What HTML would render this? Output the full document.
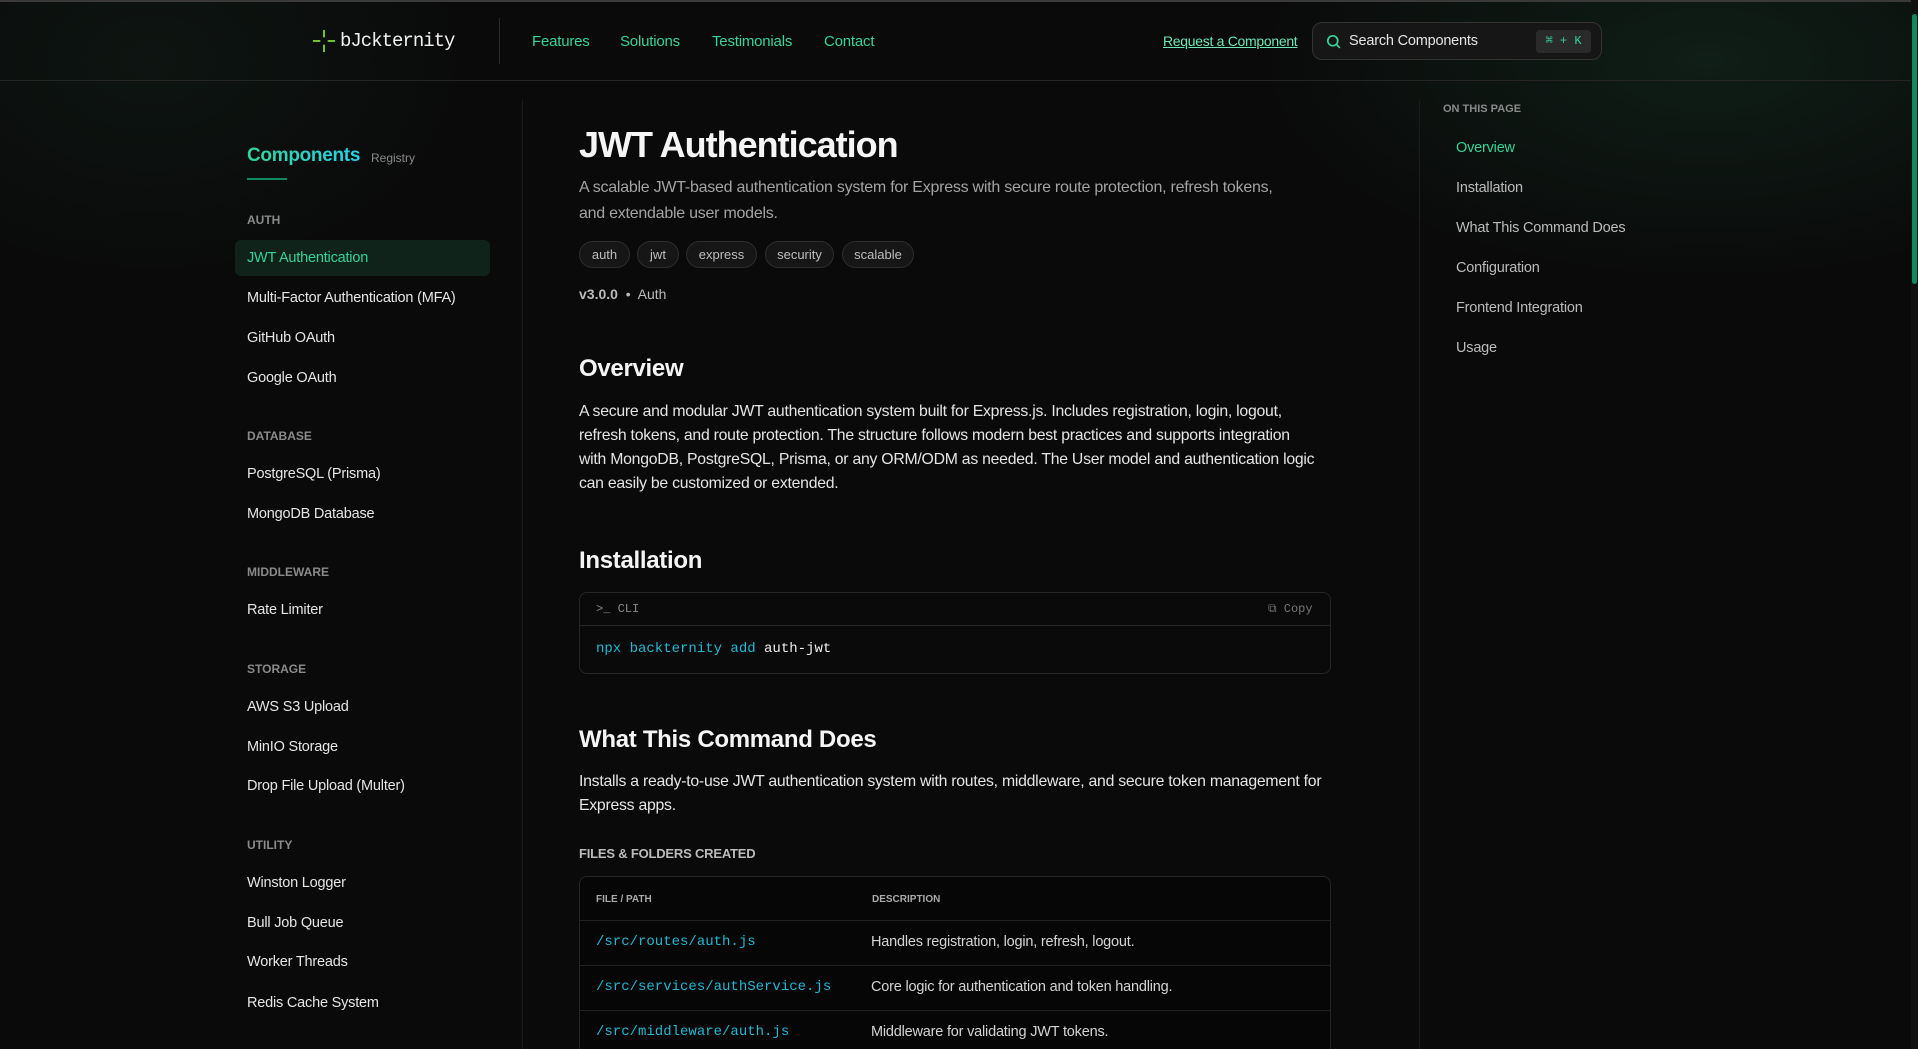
<!DOCTYPE html>
<html style="width:1918px;height:1049px;overflow:hidden"><head><meta charset="utf-8"><style>
*{box-sizing:border-box;margin:0;padding:0}
body{width:1918px;height:1049px;overflow:hidden;background:#0a0a0a;font-family:"Liberation Sans",sans-serif;color:#e5e5e5;position:relative}
.glow{position:absolute;right:0;top:0;width:700px;height:300px;background:radial-gradient(ellipse at 70% 20%,rgba(30,90,60,.25),transparent 65%)}
.glowl{position:absolute;left:0;top:0;width:500px;height:300px;background:radial-gradient(ellipse at 30% 20%,rgba(30,70,50,.18),transparent 65%)}
.top{position:absolute;left:0;top:0;width:1918px;height:2px;background:#3a3a3a}
header{position:absolute;left:0;top:2px;width:1911px;height:79px;border-bottom:1px solid #262626}
.a{position:absolute;white-space:nowrap}
.nav{color:#34d399;font-size:15px;top:33px;letter-spacing:-0.2px}
.side a,.toc a{position:absolute;white-space:nowrap;font-size:14.5px;color:#e5e5e5;letter-spacing:-0.2px}
.cat{position:absolute;font-size:12px;color:#8a8a8a;font-weight:bold;left:247px}
.tag{position:absolute;top:241px;height:27px;border:1px solid #2e2e2e;background:#161616;border-radius:14px;font-size:13px;color:#bdbdbd;text-align:center;line-height:25px}
h2{position:absolute;left:579px;font-size:24px;font-weight:bold;color:#f5f5f5;letter-spacing:-0.3px}
p.b{position:absolute;left:579px;width:752px;font-size:15.8px;line-height:24px;color:#e5e5e5;letter-spacing:-0.25px}
.mono{font-family:"Liberation Mono",monospace}
.row{position:absolute;left:580px;width:750px;border-top:1px solid #222;height:45px}
.row span{position:absolute;top:13px;font-size:14.5px;letter-spacing:-0.2px}
.row .p{left:16px;color:#22b8d6;font-family:"Liberation Mono",monospace;font-size:14px;letter-spacing:0}
.row .d{left:291px;color:#d4d4d4}
</style></head><body>
<div class="glow"></div><div class="glowl"></div>
<div class="top"></div>
<header>
 <svg class="a" style="left:312px;top:27px" width="24" height="24" viewBox="0 0 26 26" stroke="#7ccf3a" stroke-width="2"><line x1="13" y1="1" x2="13" y2="9"/><line x1="13" y1="17" x2="13" y2="25"/><line x1="1" y1="13" x2="9" y2="13"/><line x1="17" y1="13" x2="25" y2="13"/></svg>
 <div class="a" style="left:340px;top:28px;font-size:19px;font-family:'Liberation Mono',monospace;color:#f0f0f0;letter-spacing:-1px">bJckternity</div>
 <div class="a" style="left:499px;top:16px;width:1px;height:46px;background:#2a2a2a"></div>
 <div class="a nav" style="left:532px;top:31px">Features</div>
 <div class="a nav" style="left:620px;top:31px">Solutions</div>
 <div class="a nav" style="left:712px;top:31px">Testimonials</div>
 <div class="a nav" style="left:824px;top:31px">Contact</div>
 <div class="a" style="left:1163px;top:31px;font-size:14px;color:#6ee7b7;text-decoration:underline;letter-spacing:-0.3px">Request a Component</div>
 <div class="a" style="left:1312px;top:20px;width:290px;height:38px;border:1px solid #333;border-radius:10px;background:#161616">
  <svg class="a" style="left:12px;top:10px" width="17" height="17" viewBox="0 0 24 24" fill="none" stroke="#34d399" stroke-width="2.4"><circle cx="11" cy="11" r="7"/><line x1="16" y1="16" x2="21" y2="21"/></svg>
  <div class="a" style="left:36px;top:10px;font-size:14.5px;color:#e5e5e5;letter-spacing:-0.2px">Search Components</div>
  <div class="a mono" style="left:223px;top:7px;width:55px;height:23px;border-radius:4px;background:#2a2a2a;color:#34d399;font-size:12px;text-align:center;line-height:23px">⌘ + K</div>
 </div>
</header>
<div class="a" style="left:522px;top:100px;width:1px;height:949px;background:#1c1c1c"></div>
<div class="a" style="left:1419px;top:100px;width:1px;height:949px;background:#1c1c1c"></div>
<div class="a" style="left:1911px;top:0;width:7px;height:1049px;background:#111"></div>
<div class="a" style="left:1912px;top:14px;width:5px;height:270px;background:#0f8a5f;border-radius:3px"></div>
<div class="side">
 <div class="a" style="left:247px;top:145px;font-size:19px;font-weight:bold;letter-spacing:-0.3px;background:linear-gradient(90deg,#34d399,#22d3ee);-webkit-background-clip:text;color:transparent">Components</div>
 <div class="a" style="left:371px;top:151px;font-size:12px;color:#8a8a8a">Registry</div>
 <div class="a" style="left:247px;top:178px;width:40px;height:2px;background:#0f8a5f"></div>
 <div class="cat" style="top:213px">AUTH</div>
 <div class="a" style="left:235px;top:240px;width:255px;height:36px;background:#0f231b;border-radius:6px"></div>
 <a style="left:247px;top:250px;color:#34d399">JWT Authentication</a>
 <a style="left:247px;top:290px">Multi-Factor Authentication (MFA)</a>
 <a style="left:247px;top:330px">GitHub OAuth</a>
 <a style="left:247px;top:370px">Google OAuth</a>
 <div class="cat" style="top:429px">DATABASE</div>
 <a style="left:247px;top:466px">PostgreSQL (Prisma)</a>
 <a style="left:247px;top:506px">MongoDB Database</a>
 <div class="cat" style="top:565px">MIDDLEWARE</div>
 <a style="left:247px;top:602px">Rate Limiter</a>
 <div class="cat" style="top:662px">STORAGE</div>
 <a style="left:247px;top:699px">AWS S3 Upload</a>
 <a style="left:247px;top:739px">MinIO Storage</a>
 <a style="left:247px;top:778px">Drop File Upload (Multer)</a>
 <div class="cat" style="top:838px">UTILITY</div>
 <a style="left:247px;top:875px">Winston Logger</a>
 <a style="left:247px;top:915px">Bull Job Queue</a>
 <a style="left:247px;top:954px">Worker Threads</a>
 <a style="left:247px;top:995px">Redis Cache System</a>
</div>
<div class="a" style="left:579px;top:124px;font-size:36px;font-weight:bold;color:#f5f5f5;letter-spacing:-1px">JWT Authentication</div>
<p class="b" style="top:175px;color:#a3a3a3;line-height:26px;font-size:16px;width:712px">A scalable JWT-based authentication system for Express with secure route protection, refresh tokens, and extendable user models.</p>
<div class="tag" style="left:579px;width:51px">auth</div>
<div class="tag" style="left:637px;width:42px">jwt</div>
<div class="tag" style="left:686px;width:71px">express</div>
<div class="tag" style="left:765px;width:69px">security</div>
<div class="tag" style="left:842px;width:72px">scalable</div>
<div class="a" style="left:579px;top:286px;font-size:14px;color:#bbb"><b>v3.0.0</b> &nbsp;•&nbsp; Auth</div>
<h2 style="top:355px">Overview</h2>
<p class="b" style="top:400px;width:742px">A secure and modular JWT authentication system built for Express.js. Includes registration, login, logout, refresh tokens, and route protection. The structure follows modern best practices and supports integration with MongoDB, PostgreSQL, Prisma, or any ORM/ODM as needed. The User model and authentication logic can easily be customized or extended.</p>
<h2 style="top:547px">Installation</h2>
<div class="a" style="left:579px;top:592px;width:752px;height:82px;border:1px solid #262626;border-radius:8px;background:#0a0a0a">
 <div class="a" style="left:0;top:0;width:750px;height:33px;border-bottom:1px solid #262626"></div>
 <div class="a mono" style="left:16px;top:9px;font-size:12px;color:#8a8a8a">&gt;_ CLI</div>
 <div class="a mono" style="left:688px;top:9px;font-size:12px;color:#777">⧉ Copy</div>
 <div class="a mono" style="left:16px;top:48px;font-size:14px;color:#22b8d6">npx backternity add <span style="color:#f0f0f0">auth-jwt</span></div>
</div>
<h2 style="top:726px">What This Command Does</h2>
<p class="b" style="top:770px">Installs a ready-to-use JWT authentication system with routes, middleware, and secure token management for Express apps.</p>
<div class="a" style="left:579px;top:846px;font-size:13px;font-weight:bold;color:#bbb;letter-spacing:-0.2px">FILES &amp; FOLDERS CREATED</div>
<div class="a" style="left:579px;top:876px;width:752px;height:173px;border:1px solid #262626;border-bottom:none;border-radius:8px 8px 0 0;background:#060606">
 <div class="a" style="left:16px;top:17px;font-size:10px;font-weight:bold;color:#aaa">FILE / PATH</div>
 <div class="a" style="left:292px;top:17px;font-size:10px;font-weight:bold;color:#aaa">DESCRIPTION</div>
</div>
<div class="row" style="top:920px"><span class="p">/src/routes/auth.js</span><span class="d">Handles registration, login, refresh, logout.</span></div>
<div class="row" style="top:965px"><span class="p">/src/services/authService.js</span><span class="d">Core logic for authentication and token handling.</span></div>
<div class="row" style="top:1010px;height:39px"><span class="p">/src/middleware/auth.js</span><span class="d">Middleware for validating JWT tokens.</span></div>
<div class="toc">
 <div class="a" style="left:1443px;top:103px;font-size:11px;font-weight:bold;color:#8a8a8a">ON THIS PAGE</div>
 <a style="left:1456px;top:140px;color:#34d399">Overview</a>
 <a style="left:1456px;top:180px;color:#bbb">Installation</a>
 <a style="left:1456px;top:220px;color:#bbb">What This Command Does</a>
 <a style="left:1456px;top:260px;color:#bbb">Configuration</a>
 <a style="left:1456px;top:300px;color:#bbb">Frontend Integration</a>
 <a style="left:1456px;top:340px;color:#bbb">Usage</a>
</div>
</body></html>
